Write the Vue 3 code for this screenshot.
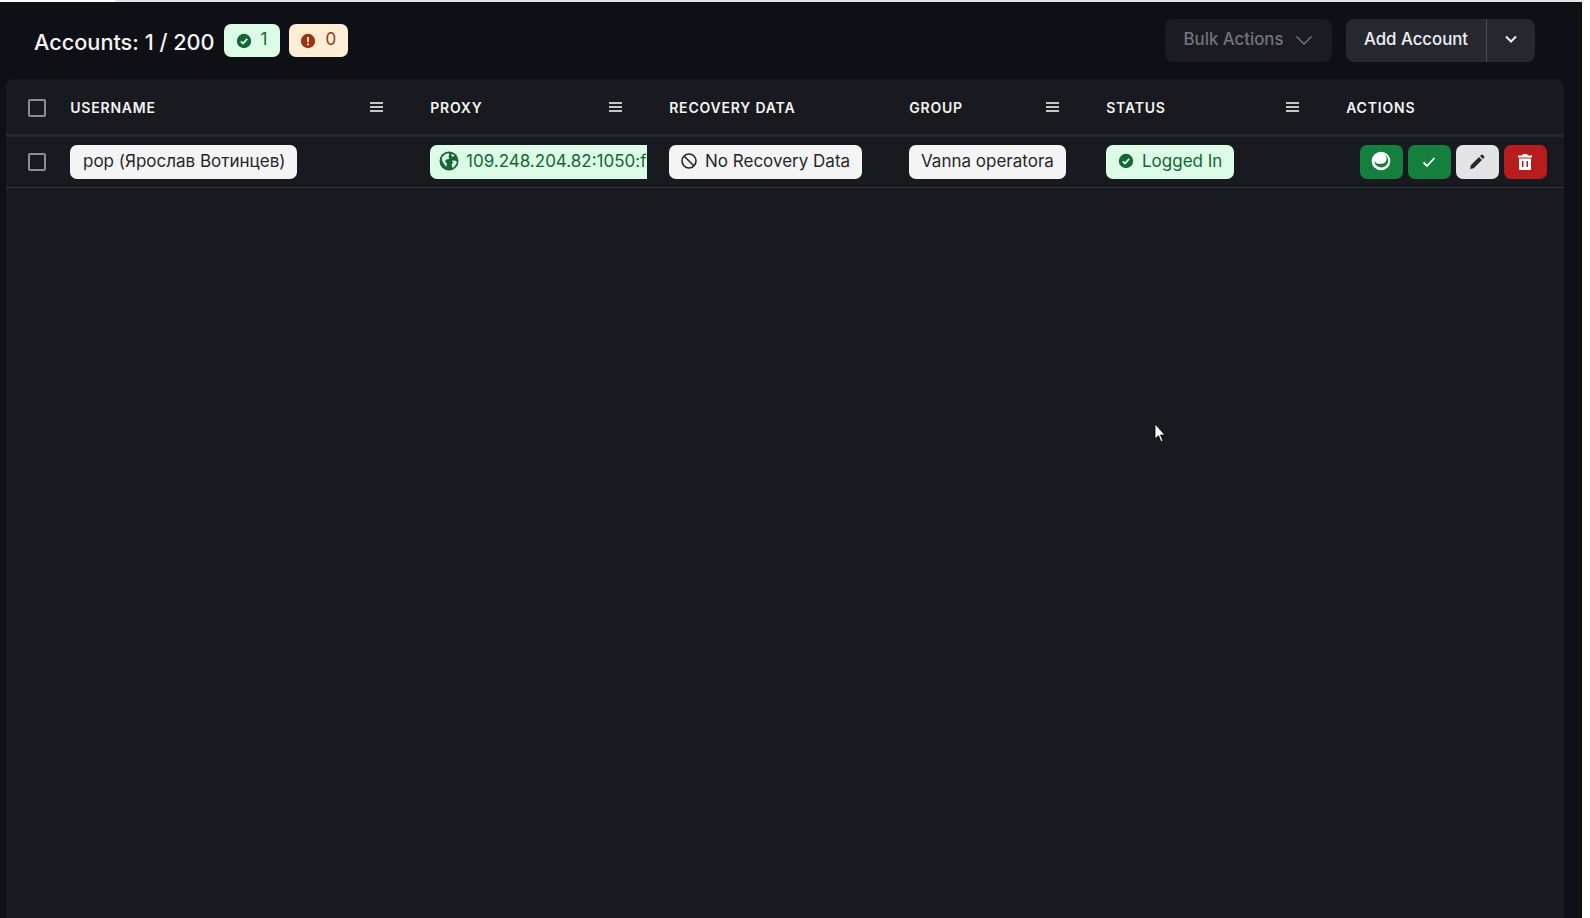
<script setup>
const cols = [
  { key: 'username', label: 'USERNAME', menu: true },
  { key: 'proxy', label: 'PROXY', menu: true },
  { key: 'recovery', label: 'RECOVERY DATA', menu: false },
  { key: 'group', label: 'GROUP', menu: true },
  { key: 'status', label: 'STATUS', menu: true },
  { key: 'actions', label: 'ACTIONS', menu: false },
]
</script>

<template>
  <div class="page">
    <div class="topstrip"><span class="topwhite"></span></div>
    <header class="toolbar">
      <div class="summary">
        <h1 class="title">Accounts: 1 / 200</h1>
        <span class="badge green">
          <svg class="ic18" viewBox="0 0 20 20"><circle cx="10" cy="10" r="8" fill="#166534"/><path d="M6.4 10.3l2.5 2.4 4.7-5" fill="none" stroke="#dcfce7" stroke-width="1.9"/></svg>
          1
        </span>
        <span class="badge orange">
          <svg class="ic18" viewBox="0 0 20 20"><circle cx="10" cy="10" r="8" fill="#9a3412"/><rect x="9" y="5.4" width="2" height="6" rx="1" fill="#ffedd5"/><circle cx="10" cy="13.7" r="1.2" fill="#ffedd5"/></svg>
          0
        </span>
      </div>
      <div class="tools">
        <button class="bulk">
          Bulk Actions
          <svg class="chev" width="18" height="18" viewBox="0 0 18 18"><path d="M1.5 5.5l7.5 7.5 7.5-7.5" fill="none" stroke="currentColor" stroke-width="1.5"/></svg>
        </button>
        <div class="split">
          <button class="add">Add Account</button>
          <button class="caret">
            <svg width="14" height="14" viewBox="0 0 14 14"><path d="M2 4.5l5 5 5-5" fill="none" stroke="currentColor" stroke-width="2"/></svg>
          </button>
        </div>
      </div>
    </header>

    <main class="panel">
      <div class="row head">
        <div class="cell check"><span class="box"></span></div>
        <div v-for="c in cols" :key="c.key" class="th">
          <span>{{ c.label }}</span>
          <svg v-if="c.menu" class="menu" width="14" height="10" viewBox="0 0 14 10"><path d="M0 1h13M0 5h13M0 9h13" stroke="#fff" stroke-width="1.5"/></svg>
        </div>
      </div>
      <div class="row body">
        <div class="cell check up"><span class="box"></span></div>
        <div class="cell"><span class="pill white name">pop (Ярослав Вотинцев)</span></div>
        <div class="cell clip">
          <span class="pill green proxy">
            <svg class="ic20" viewBox="0 0 20 20"><circle cx="10" cy="10" r="9.5" fill="#166534"/><path d="M3 6.5l3-3.3 3.5-.9 1 1.5-1.3 1.7 1.3 1.2-1 1.6-2.5.2-1 2 1.8 2-.3 3.5L5 13 3 9.5zM13 9.5l3.8.2 1.2 1.800-2.500 4-2 1.500-1-3.500 1.500-1.500zM12.500 3l3 1-1.500 2-1.500-1z" fill="#dcfce7"/></svg>
            <span>109.248.204.82:1050:f</span>
          </span>
        </div>
        <div class="cell">
          <span class="pill white tight">
            <svg class="ic18" viewBox="0 0 18 18"><circle cx="9" cy="9" r="7" fill="none" stroke="#27272a" stroke-width="1.6"/><path d="M4 4l10 10" stroke="#27272a" stroke-width="1.6"/></svg>
            No Recovery Data
          </span>
        </div>
        <div class="cell"><span class="pill white">Vanna operatora</span></div>
        <div class="cell">
          <span class="pill green tight">
            <svg class="ic18" viewBox="0 0 20 20"><circle cx="10" cy="10" r="8" fill="#166534"/><path d="M6.4 10.3l2.5 2.4 4.7-5" fill="none" stroke="#dcfce7" stroke-width="1.9"/></svg>
            Logged In
          </span>
        </div>
        <div class="cell acts">
          <button class="act g">
            <svg class="lift" width="20" height="20" viewBox="0 0 20 20"><circle cx="10" cy="10" r="9.3" fill="#fff"/><path d="M11 2.600A7 7 0 1 1 3.300 10.200C5 12.200 7 13.300 10.200 12.700A4.800 4.800 0 0 0 11 2.600z" fill="#15803d"/></svg>
          </button>
          <button class="act g">
            <svg width="14" height="14" viewBox="0 0 14 14"><path d="M1.500 7.500l3.500 3.500 7.500-8" fill="none" stroke="#fff" stroke-width="1.800"/></svg>
          </button>
          <button class="act grey">
            <svg width="16" height="16" viewBox="0 0 16 16"><path d="M1 15l.8-3.700L10 3l3 3-8.300 8.300zM11 2l1.400-1.200a1 1 0 0 1 1.300 0l1.500 1.500a1 1 0 0 1 0 1.300L14 4.900z" fill="#27272a"/></svg>
          </button>
          <button class="act r">
            <svg width="14" height="16" viewBox="0 0 14 16"><path d="M5 0h4l1 1.500h4V3.500H0V1.500h4zM1 4.500h12V15a1 1 0 0 1-1 1H2a1 1 0 0 1-1-1zm3 2.500v6h1.500V7zm4.500 0v6H10V7z" fill="#fff" fill-rule="evenodd"/></svg>
          </button>
        </div>
      </div>
    </main>

    <svg class="cursor" width="14" height="20" viewBox="0 0 14 20"><path d="M1 1v15l3.500-3.300 2.500 6 2-1-2.500-5.700H11z" fill="#fff" stroke="#000" stroke-width=".8"/></svg>
  </div>
</template>

<style scoped>
.page {
  position: relative;
  width: 1582px;
  height: 918px;
  overflow: hidden;
  background: #0f1015;
  font-family: Inter, "Noto Sans", sans-serif;
  color: #e4e4e7;
}
.topstrip { height: 2px; background: #e4e4e7; }
.topwhite { display: block; width: 115px; height: 2px; background: #fff; }
.toolbar {
  display: flex;
  justify-content: space-between;
  align-items: flex-start;
  height: 77px;
  padding: 17px 47px 0 34px;
  box-sizing: border-box;
}
.summary { display: flex; align-items: center; gap: 9px; padding-top: 3px; }
.title { margin: 4px 0 0; font-size: 21.7px; font-weight: 500; color: #f4f4f5; line-height: 33px; }
.badge {
  display: inline-flex;
  align-items: center;
  gap: 8px;
  height: 33px;
  padding: 0 12px 4px 11px;
  border-radius: 7px;
  font-size: 17px;
  box-sizing: border-box;
}
.badge svg { margin-top: 4px; }
.badge.green { background: #dcfce7; color: #166534; }
.badge.orange { background: #ffedd5; color: #9a3412; padding-left: 10px; gap: 9px; }
.ic18 { width: 18px; height: 18px; flex: none; }
.ic20 { width: 20px; height: 20px; flex: none; }
.tools { display: flex; gap: 14px; }
button { font-family: inherit; border: 0; padding: 0; cursor: pointer; }
.bulk {
  display: flex;
  align-items: center;
  gap: 12px;
  width: 167px;
  height: 43px;
  justify-content: center;
  padding-bottom: 3px;
  border-radius: 8px;
  background: #1a1c21;
  color: #71757e;
  font-size: 16.8px;
  font-weight: 500;
}
.chev { margin-top: 1px; }
.split { display: flex; height: 43px; border-radius: 8px; overflow: hidden; background: #26282f; }
.add {
  width: 141px;
  padding-bottom: 3px;
  background: none;
  color: #f0f0f2;
  font-size: 16.8px;
  font-weight: 500;
  border-right: 1px solid #4b4d55;
}
.caret {
  width: 48px;
  padding-bottom: 3px;
  background: none;
  color: #f0f0f2;
  display: flex;
  align-items: center;
  justify-content: center;
}
.panel {
  margin-left: 6px;
  width: 1558px;
  height: 839px;
  background: #191a1f;
  border-radius: 8px 8px 0 0;
}
.row {
  display: grid;
  grid-template-columns: 48px 360px 239px 240px 197px 240px 234px;
  align-items: center;
}
.head { height: 58px; padding-top: 2px; border-bottom: 3px solid #26272d; box-sizing: border-box; }
.body { height: 51px; border-bottom: 1px solid #33343a; box-sizing: border-box; }
.cell { padding-left: 16px; min-width: 0; display: flex; align-items: center; }
.check { padding-left: 22px; }
.up { padding-bottom: 1px; }
.box {
  display: block;
  width: 18px;
  height: 18px;
  border: 2px solid #8c8d91;
  border-radius: 2px;
  box-sizing: border-box;
}
.th {
  position: relative;
  padding-left: 16.2px;
  font-size: 14px;
  font-weight: 600;
  letter-spacing: 0.8px;
  color: #f4f4f5;
}
.menu { position: absolute; right: 30px; top: 50%; margin-top: -6px; }
.clip { padding-right: 6px; }
.clip .pill { border-radius: 7px 0 0 7px; }
.pill {
  display: inline-flex;
  align-items: center;
  gap: 8px;
  height: 34px;
  padding: 0 12px 2px;
  border-radius: 7px;
  font-size: 17px;
  line-height: 24px;
  white-space: nowrap;
  overflow: hidden;
  box-sizing: border-box;
}
.pill.name { padding-left: 13px; }
.pill.tight { padding-left: 11px; padding-right: 11.5px; gap: 7px; }
.pill.white { background: #f4f4f5; color: #27272a; }
.pill.green { background: #dcfce7; color: #166534; }
.proxy { width: 100%; padding: 0 0 2px 9px; gap: 7px; }
.acts { gap: 5px; padding-left: 30px; }
.act {
  width: 43px;
  height: 34px;
  padding: 0 1px 1px 0;
  border-radius: 7px;
  display: flex;
  align-items: center;
  justify-content: center;
}
.lift { margin-bottom: 1px; }
.act.g { background: #15803d; }
.act.grey { background: #e4e4e7; }
.act.r { background: #b91c1c; }
.cursor { position: absolute; left: 1154px; top: 423px; }
</style>

<style>
html, body { background: #fff; }
</style>
